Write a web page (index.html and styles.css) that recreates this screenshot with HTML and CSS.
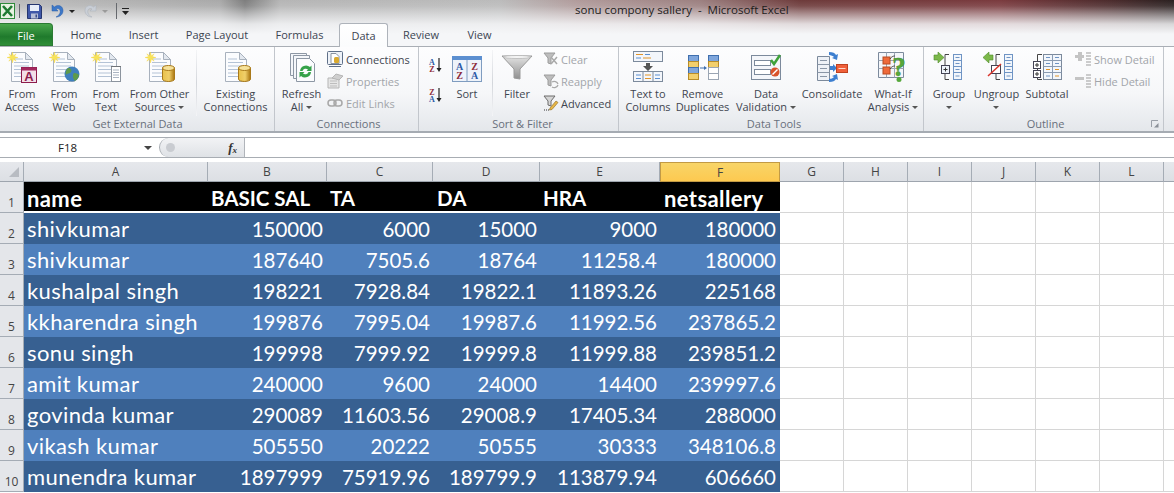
FILE: index.html
```html
<!DOCTYPE html>
<html lang="en">
<head>
<meta charset="utf-8">
<title>sonu compony sallery - Microsoft Excel</title>
<link rel="stylesheet" href="styles.css">
</head>
<body>
<svg class="defs" aria-hidden="true">
  <defs>
    <linearGradient id="gold" x1="0" x2="1" y1="0" y2="0"><stop offset="0" stop-color="#e8c04a"/><stop offset=".55" stop-color="#f0cf6a"/><stop offset="1" stop-color="#a9740f"/></linearGradient>
    <linearGradient id="funnel" x1="0" x2="0" y1="0" y2="1"><stop offset="0" stop-color="#e4e4e4"/><stop offset="1" stop-color="#8f8f8f"/></linearGradient>
    <symbol id="doc" viewBox="0 0 32 32">
      <path d="M5.500 1.500h14l7 7v22h-21z" fill="#fbfcfe" stroke="#a8b1bd"/>
      <path d="M19.500 1.500v7h7z" fill="#e3e8ef" stroke="#a8b1bd"/>
      <path d="M8 8h9M8 11.500h15M8 15h15M8 18.500h15M8 22h15M8 25.500h15" stroke="#b4c3d6"/>
    </symbol>
    <symbol id="star" viewBox="0 0 12 12">
      <path d="M6 0l1 4 3-2-2 3 4 1-4 1 2 3-3-2-1 4-1-4-3 2 2-3-4-1 4-1-2-3 3 2z" fill="#f7e35a" stroke="#f5d33a" stroke-width=".4"/>
    </symbol>
    <symbol id="cyl" viewBox="0 0 13 17">
      <path d="M.5 3v11c0 3.300 12 3.300 12 0V3z" fill="url(#gold)" stroke="#a9791a"/>
      <ellipse cx="6.500" cy="3" rx="6" ry="2.500" fill="#f6e29a" stroke="#a9791a"/>
    </symbol>
    <symbol id="greyfunnel" viewBox="0 0 16 16">
      <path d="M1 2h11L8 7v6l-3-1V7z" fill="#bdbdbd" stroke="#9c9c9c"/>
    </symbol>
  </defs>
</svg>

<header class="chrome">
  <div class="titlebar">
    <div class="qat">
      <svg class="qi xl" viewBox="0 0 15 16"><rect x=".5" y=".5" width="14" height="15" fill="#e8f2e2" stroke="#2f8a3c"/><path d="M3 3l9 10M12 3L3 13" stroke="#1f7a32" stroke-width="2.600"/></svg>
      <span class="qsep"></span>
      <svg class="qi save" viewBox="0 0 15 15"><path d="M.5.500h12l2 2v12H.5z" fill="#4058a8" stroke="#26366f"/><rect x="3" y="1" width="9" height="6" fill="#e8eef8"/><rect x="4" y="9.500" width="7" height="5" fill="#b7bfd6"/><rect x="8.500" y="10.500" width="1.500" height="3" fill="#3a4b86"/></svg>
      <svg class="qi undo" viewBox="0 0 13 14"><path d="M1 1v6h6L5 5c3-1.500 5 1 4 4-.5 1.500-2 3-4 4 4 0 7-2.500 7-6.500C12 2 7 0 3.500 3z" fill="#3d78c8" stroke="#2a5ca6" stroke-width=".5"/></svg>
      <i class="caret"></i>
      <svg class="qi redo" viewBox="0 0 13 14"><path d="M12 1v6H6l2-2C5 3.500 3 6 4 9c.5 1.500 2 3 4 4-4 0-7-2.500-7-6.500C1 2 6 0 9.500 3z" fill="#c9ced6" stroke="#aab0b8" stroke-width=".5"/></svg>
      <i class="caret off"></i>
      <span class="qsep second"></span>
      <svg class="qi custom" viewBox="0 0 7 7"><path d="M0 .5h7" stroke="#222"/><path d="M0 3h7L3.500 7z" fill="#222"/></svg>
    </div>
    <div class="doctitle">sonu compony sallery&nbsp; -&nbsp; Microsoft Excel</div>
  </div>
  <nav class="tabs">
    <div class="tab file">File</div>
    <div class="tab t-home">Home</div>
    <div class="tab t-insert">Insert</div>
    <div class="tab t-page">Page Layout</div>
    <div class="tab t-form">Formulas</div>
    <div class="tab t-data">Data</div>
    <div class="tab t-review">Review</div>
    <div class="tab t-view">View</div>
  </nav>
</header>

<section class="ribbon">
  <div class="group g-ext">
    <div class="gbody">
      <div class="big w-42">
        <svg class="ic" viewBox="0 0 32 32"><use href="#doc"/><use href="#star" x="1" y="1" width="11" height="11"/><rect x="15.500" y="16.500" width="15" height="15" fill="#f3dfe8" stroke="#8c1c4c"/><rect x="15.500" y="16.500" width="15" height="3" fill="#a3285e"/><text x="23" y="30" class="svgA">A</text></svg>
        <span class="lb">From<br>Access</span>
      </div>
      <div class="big w-42">
        <svg class="ic" viewBox="0 0 32 32"><use href="#doc"/><use href="#star" x="1" y="1" width="11" height="11"/><circle cx="24" cy="23" r="7.500" fill="#3f7fbd"/><path d="M20 17c3 0 4 2 3 4s-4 1-5 3c-1-3 0-5 2-7zM26 22c3 0 4 1 5 2-.500 3-2 5-4 6-2-2-3-6-1-8z" fill="#5e9a4a"/></svg>
        <span class="lb">From<br>Web</span>
      </div>
      <div class="big w-42">
        <svg class="ic" viewBox="0 0 32 32"><use href="#doc"/><use href="#star" x="1" y="1" width="11" height="11"/><rect x="21.500" y="15.500" width="9" height="15" fill="#fff" stroke="#8c949e"/><path d="M21.500 15.500h9" stroke="#555" stroke-dasharray="1 1"/><path d="M23 19h6M23 21.500h6M23 24h6M23 26.500h6" stroke="#aab4c2"/></svg>
        <span class="lb">From<br>Text</span>
      </div>
      <div class="big w-65">
        <svg class="ic" viewBox="0 0 32 32"><use href="#doc"/><use href="#star" x="1" y="1" width="11" height="11"/><use href="#cyl" x="18" y="14" width="13" height="17"/></svg>
        <span class="lb">From Other<br>Sources<i class="dd"></i></span>
      </div>
      <span class="sep s-ext"></span>
      <div class="big w-71">
        <svg class="ic" viewBox="0 0 32 32"><use href="#doc"/><use href="#cyl" x="18" y="14" width="13" height="17"/></svg>
        <span class="lb">Existing<br>Connections</span>
      </div>
    </div>
    <div class="glabel">Get External Data</div>
  </div>

  <div class="group g-conn">
    <div class="gbody">
      <div class="big w-45">
        <svg class="ic" viewBox="0 0 32 32"><path d="M4.500 2.500h16v22h-16z" fill="#f4f6fa" stroke="#8d97a4"/><path d="M7.500 4.500h16v23h-16z" fill="#f4f6fa" stroke="#8d97a4"/><path d="M10.500 7.500h13l5 5v18h-18z" fill="#fbfcfe" stroke="#8d97a4"/><path d="M14 20a6 6 0 0 1 10-4l1.500-1.500V20h-5l1.500-1.500a3.500 3.500 0 0 0-5.500 1.500z" fill="#35a24a"/><path d="M25 21a6 6 0 0 1-10 4l-1.500 1.500V21h5L17 22.500a3.500 3.500 0 0 0 5.500-1.500z" fill="#35a24a"/></svg>
        <span class="lb">Refresh<br>All<i class="dd"></i></span>
      </div>
      <div class="smalls s-conn">
        <div class="sm"><svg class="si" viewBox="0 0 16 16"><rect x=".5" y=".5" width="15" height="13" rx="1" fill="#eef2f8" stroke="#5f6f88"/><path d="M4 2.500h5l3 3v7H4z" fill="#fff" stroke="#8a93a0"/><rect x="7" y="6" width="5" height="6" rx="1.500" fill="#d9a92e"/><path d="M2 15.500h12" stroke="#5f6f88"/></svg><span>Connections</span></div>
        <div class="sm off"><svg class="si" viewBox="0 0 16 16"><path d="M1 5h11v10H1z" fill="#e6e6e6" stroke="#b5b5b5"/><path d="M3 8h7M3 10.500h7M3 13h7" stroke="#bdbdbd"/><path d="M5 5l4-4 7 2-4 4z" fill="#cfcfcf" stroke="#b5b5b5"/></svg><span>Properties</span></div>
        <div class="sm off"><svg class="si" viewBox="0 0 16 16"><rect x="1" y="5" width="8" height="6" rx="3" fill="none" stroke="#a8a8a8" stroke-width="1.500"/><rect x="7" y="5" width="8" height="6" rx="3" fill="none" stroke="#a8a8a8" stroke-width="1.500"/></svg><span>Edit Links</span></div>
      </div>
    </div>
    <div class="glabel">Connections</div>
  </div>

  <div class="group g-sort">
    <div class="gbody">
      <div class="azs">
        <svg class="az" viewBox="0 0 16 16"><text x="5" y="8" class="svgL blue">A</text><text x="5" y="15" class="svgL red">Z</text><path d="M12 1v12" stroke="#222" stroke-width="1.200"/><path d="M9.500 11h5L12 15z" fill="#222"/></svg>
        <svg class="az" viewBox="0 0 16 16"><text x="5" y="8" class="svgL red">Z</text><text x="5" y="15" class="svgL blue">A</text><path d="M12 1v12" stroke="#222" stroke-width="1.200"/><path d="M9.500 11h5L12 15z" fill="#222"/></svg>
      </div>
      <div class="big w-44">
        <svg class="ic" viewBox="0 0 32 32"><rect x="1.500" y="5.500" width="29" height="25" fill="#eef3fa" stroke="#7f9cc0"/><rect x="1" y="5" width="30" height="4" fill="#5c8fd0"/><path d="M16 9v21" stroke="#7f9cc0"/><text x="8.500" y="19" class="svgM blue">A</text><text x="8.500" y="28" class="svgM red">Z</text><text x="23.500" y="19" class="svgM red">Z</text><text x="23.500" y="28" class="svgM blue">A</text></svg>
        <span class="lb">Sort</span>
      </div>
      <span class="sep s-sort"></span>
      <div class="big w-42">
        <svg class="ic" viewBox="0 0 32 32"><path d="M1 5h30L19 18v10l-6-1V18z" fill="url(#funnel)" stroke="#9a9a9a"/><ellipse cx="16" cy="6" rx="14" ry="1.500" fill="#f4f4f4" stroke="#a8a8a8" stroke-width=".6"/></svg>
        <span class="lb">Filter</span>
      </div>
      <div class="smalls s-filter">
        <div class="sm off"><svg class="si" viewBox="0 0 16 16"><use href="#greyfunnel"/><path d="M8 6l6 7M14 6l-6 7" stroke="#a9a9a9" stroke-width="1.500"/></svg><span>Clear</span></div>
        <div class="sm off"><svg class="si" viewBox="0 0 16 16"><use href="#greyfunnel"/><path d="M9 9a4 4 0 0 1 6 2M15 12a4 4 0 0 1-6 2" stroke="#a9a9a9" stroke-width="1.300" fill="none"/></svg><span>Reapply</span></div>
        <div class="sm"><svg class="si" viewBox="0 0 16 16"><path d="M1 1h11L8 6v5l-3-1V6z" fill="#d5d5d5" stroke="#6d6d6d"/><path d="M7 13l6-7 2 1.500-6 7-2.500.5z" fill="#e7b648" stroke="#8a6a1d" stroke-width=".6"/><path d="M1 15h5" stroke="#333" stroke-dasharray="1 1"/></svg><span>Advanced</span></div>
      </div>
    </div>
    <div class="glabel">Sort &amp; Filter</div>
  </div>

  <div class="group g-tools">
    <div class="gbody">
      <div class="big w-46">
        <svg class="ic" viewBox="0 0 32 32"><rect x="1.500" y=".5" width="29" height="10" fill="#f3f6fb" stroke="#7c8a9c"/><path d="M4 3.500h7" stroke="#e0942a"/><path d="M13 3.500h5M4 7h5" stroke="#5c8fd0"/><path d="M11 7h8" stroke="#e0942a"/><path d="M14 12h4v3h3l-5 5-5-5h3z" fill="#555"/><rect x="1.500" y="20.500" width="29" height="10" fill="#f3f6fb" stroke="#7c8a9c"/><path d="M11 20.500v10M21 20.500v10" stroke="#7c8a9c"/><path d="M4 24h5M4 27.500h5M23 24h5M23 27.500h5" stroke="#5c8fd0"/><path d="M13 24h6M13 27.500h6" stroke="#e0942a"/></svg>
        <span class="lb">Text to<br>Columns</span>
      </div>
      <div class="big w-63">
        <svg class="ic" viewBox="0 0 32 32"><rect x="1.500" y="4.500" width="10" height="6" fill="#7fa6dc" stroke="#3f6fae"/><rect x="1.500" y="10.500" width="10" height="6" fill="#f2cf6c" stroke="#b88c28"/><rect x="1.500" y="16.500" width="10" height="6" fill="#7fa6dc" stroke="#3f6fae"/><rect x="1.500" y="22.500" width="10" height="6" fill="#f2cf6c" stroke="#b88c28"/><path d="M13 17h5" stroke="#3f6fae"/><path d="M17 15l3 2-3 2z" fill="#3f6fae"/><rect x="21.500" y="4.500" width="10" height="6" fill="#7fa6dc" stroke="#3f6fae"/><rect x="21.500" y="10.500" width="10" height="6" fill="#f2cf6c" stroke="#b88c28"/><rect x="21.500" y="16.500" width="10" height="6" fill="#fff" stroke="#9aa5b3"/><rect x="21.500" y="22.500" width="10" height="6" fill="#fff" stroke="#9aa5b3"/></svg>
        <span class="lb">Remove<br>Duplicates</span>
      </div>
      <div class="big w-64">
        <svg class="ic" viewBox="0 0 32 32"><rect x="1.500" y="4.500" width="29" height="24" fill="#f4f6fa" stroke="#7c8a9c"/><rect x="4.500" y="9.500" width="16" height="5" fill="#fff" stroke="#7c8a9c"/><rect x="4.500" y="18.500" width="16" height="5" fill="#fff" stroke="#7c8a9c"/><path d="M21 9l3 4 6-9" fill="none" stroke="#3fa23a" stroke-width="2.500"/><circle cx="25" cy="21" r="4.500" fill="#d9532b"/><path d="M22.500 23.500l5-5" stroke="#fff" stroke-width="1.500"/></svg>
        <span class="lb">Data<br>Validation<i class="dd"></i></span>
      </div>
      <div class="big w-68">
        <svg class="ic" viewBox="0 0 32 32"><path d="M1.500 5.500h12v24h-12z" fill="#eef1f6" stroke="#7c8a9c"/><path d="M1.500 13.500h12M1.500 21.500h12M4 9.500h7M4 17.500h7M4 25.500h7" stroke="#8a96a6"/><path d="M14 15h3v-2l4 4-4 4v-2h-3z" fill="#3d7fd0"/><rect x="20.500" y="13.500" width="11" height="8" fill="#f0603a" stroke="#c0421f"/><path d="M22.500 17.500h7" stroke="#ffd6c8"/><path d="M13 1c4 0 6 1 7 3l2-1-1 6-5-2 2-1c-1-1-3-2-5-2zM13 31c4 0 6-1 7-3l2 1-1-6-5 2 2 1c-1 1-3 2-5 2z" fill="#3d7fd0"/></svg>
        <span class="lb">Consolidate</span>
      </div>
      <div class="big w-54">
        <svg class="ic" viewBox="0 0 32 32"><path d="M1.500 1.500h25v25h-25z" fill="#f4f6fa" stroke="#7c8a9c"/><path d="M1.500 9.500h25M1.500 17.500h25M9.500 1.500v25M17.500 1.500v25" stroke="#9aa5b3"/><rect x="6" y="6" width="7" height="7" fill="#ef6a3a" stroke="#b84a20"/><rect x="6" y="16" width="7" height="7" fill="#ef6a3a" stroke="#b84a20"/><path d="M13 8c2-3 4-3 5-3M13 18c2-3 4-3 5-3" stroke="#444" fill="none"/><text x="22" y="25" class="svgQ">?</text><circle cx="22" cy="28.500" r="2.500" fill="#56a83c"/></svg>
        <span class="lb">What-If<br>Analysis<i class="dd"></i></span>
      </div>
    </div>
    <div class="glabel">Data Tools</div>
  </div>

  <div class="group g-out">
    <div class="gbody">
      <div class="big w-42">
        <svg class="ic" viewBox="0 0 32 32"><path d="M1 4h4V1l6 5.500L5 12V9H1z" fill="#7cb84a" stroke="#4d8a2a" stroke-width=".6"/><path d="M16 3.500h-4v11M12 21v7.500h4" fill="none" stroke="#444"/><rect x="8.500" y="14.500" width="8" height="8" fill="#eef3fa" stroke="#445"/><path d="M10.500 18.500h4M12.500 16.500v4" stroke="#333"/><rect x="20.500" y="3.500" width="8" height="25" fill="#f2f6fc" stroke="#6f94c4"/><path d="M20.500 9.500h8M20.500 15.500h8M20.500 21.500h8" stroke="#6f94c4"/><path d="M22.500 6.500h4M22.500 12.500h4M22.500 18.500h4M22.500 25h4" stroke="#6f94c4"/></svg>
        <span class="lb">Group<br><i class="dd solo"></i></span>
      </div>
      <div class="big w-53">
        <svg class="ic" viewBox="0 0 32 32"><path d="M12 4H8V1L2 6.500 8 12V9h4z" fill="#7cb84a" stroke="#4d8a2a" stroke-width=".6"/><path d="M19 3.500h-4v11M15 21v7.500h4" fill="none" stroke="#444"/><rect x="10.500" y="14.500" width="9" height="8" fill="#fff" stroke="#445"/><path d="M7 25l13-12" stroke="#d9342b" stroke-width="1.500"/><rect x="23.500" y="3.500" width="8" height="25" fill="#f2f6fc" stroke="#6f94c4"/><path d="M23.500 9.500h8M23.500 15.500h8M23.500 21.500h8" stroke="#6f94c4"/><path d="M25.500 6.500h4M25.500 12.500h4M25.500 18.500h4M25.500 25h4" stroke="#6f94c4"/></svg>
        <span class="lb">Ungroup<br><i class="dd solo"></i></span>
      </div>
      <div class="big w-48">
        <svg class="ic" viewBox="0 0 32 32"><path d="M11 3.500H6.500V10M6.500 16v3M6.500 25v3.500H11" fill="none" stroke="#444"/><rect x="2.500" y="10.500" width="7" height="7" fill="#fff" stroke="#445"/><rect x="2.500" y="19.500" width="7" height="7" fill="#fff" stroke="#445"/><path d="M4 14h4M6 12v4M4 23h4M6 21v4" stroke="#333"/><rect x="12.500" y="3.500" width="18" height="25" fill="#f2f6fc" stroke="#7c8a9c"/><path d="M12.500 9.500h18M12.500 15.500h18M12.500 21.500h18M21.500 3.500v25" stroke="#8a9bb2"/><path d="M15 6.500h4M15 12.500h4M15 25h4" stroke="#6f94c4"/><path d="M15 18.500h4M24 18.500h4M24 25h4" stroke="#e0942a"/><path d="M24 6.500h4M24 12.500h4" stroke="#6f94c4"/></svg>
        <span class="lb">Subtotal</span>
      </div>
      <div class="smalls s-out">
        <div class="sm off"><svg class="si" viewBox="0 0 16 16"><path d="M0 4h3V1h4v3h2v3H7v3H3V7H0z" fill="#c4c4c4"/><path d="M11 2h5M11 5h5M11 8h5M11 11h5M11 14h5" stroke="#9d9d9d"/></svg><span>Show Detail</span></div>
        <div class="sm off"><svg class="si" viewBox="0 0 16 16"><rect x="0" y="4" width="9" height="3" fill="#c4c4c4"/><path d="M11 2h5M11 5h5M11 8h5M11 11h5M11 14h5" stroke="#9d9d9d"/></svg><span>Hide Detail</span></div>
      </div>
    </div>
    <div class="glabel">Outline</div>
    <svg class="launcher" viewBox="0 0 8 8"><path d="M.5 7V.5H7" fill="none" stroke="#9aa0a8"/><path d="M7.500 3v4.500H3z" fill="#8a9098"/></svg>
  </div>
</section>

<div class="formula">
  <div class="namebox"><span class="namev">F18</span><i class="caret name"></i></div>
  <div class="fxwrap"><span class="knob"></span><span class="fx">f<sub>x</sub></span></div>
  <div class="finput"></div>
</div>

<main class="sheet">
<table class="grid">
  <colgroup><col class="c0"><col class="ca"><col class="cb"><col class="cc"><col class="cd"><col class="ce"><col class="cf"><col class="cx"><col class="cx"><col class="cx"><col class="cx"><col class="cx"><col class="cx"><col class="cx"></colgroup>
  <thead><tr><th class="corner"><span class="tri"></span></th><th>A</th><th>B</th><th>C</th><th>D</th><th>E</th><th class="sel">F</th><th>G</th><th>H</th><th>I</th><th>J</th><th>K</th><th>L</th><th></th></tr></thead>
  <tbody>
    <tr class="head"><th>1</th><td>name</td><td class="caps">BASIC SAL</td><td class="caps">TA</td><td class="caps">DA</td><td class="caps">HRA</td><td>netsallery</td><td class="e"></td><td class="e"></td><td class="e"></td><td class="e"></td><td class="e"></td><td class="e"></td><td class="e"></td></tr>
    <tr class="dark"><th>2</th><td>shivkumar</td><td class="n">150000</td><td class="n">6000</td><td class="n">15000</td><td class="n">9000</td><td class="n">180000</td><td class="e"></td><td class="e"></td><td class="e"></td><td class="e"></td><td class="e"></td><td class="e"></td><td class="e"></td></tr>
    <tr class="light"><th>3</th><td>shivkumar</td><td class="n">187640</td><td class="n">7505.6</td><td class="n">18764</td><td class="n">11258.4</td><td class="n">180000</td><td class="e"></td><td class="e"></td><td class="e"></td><td class="e"></td><td class="e"></td><td class="e"></td><td class="e"></td></tr>
    <tr class="dark"><th>4</th><td>kushalpal singh</td><td class="n">198221</td><td class="n">7928.84</td><td class="n">19822.1</td><td class="n">11893.26</td><td class="n">225168</td><td class="e"></td><td class="e"></td><td class="e"></td><td class="e"></td><td class="e"></td><td class="e"></td><td class="e"></td></tr>
    <tr class="light"><th>5</th><td>kkharendra singh</td><td class="n">199876</td><td class="n">7995.04</td><td class="n">19987.6</td><td class="n">11992.56</td><td class="n">237865.2</td><td class="e"></td><td class="e"></td><td class="e"></td><td class="e"></td><td class="e"></td><td class="e"></td><td class="e"></td></tr>
    <tr class="dark"><th>6</th><td>sonu singh</td><td class="n">199998</td><td class="n">7999.92</td><td class="n">19999.8</td><td class="n">11999.88</td><td class="n">239851.2</td><td class="e"></td><td class="e"></td><td class="e"></td><td class="e"></td><td class="e"></td><td class="e"></td><td class="e"></td></tr>
    <tr class="light"><th>7</th><td>amit kumar</td><td class="n">240000</td><td class="n">9600</td><td class="n">24000</td><td class="n">14400</td><td class="n">239997.6</td><td class="e"></td><td class="e"></td><td class="e"></td><td class="e"></td><td class="e"></td><td class="e"></td><td class="e"></td></tr>
    <tr class="dark"><th>8</th><td>govinda kumar</td><td class="n">290089</td><td class="n">11603.56</td><td class="n">29008.9</td><td class="n">17405.34</td><td class="n">288000</td><td class="e"></td><td class="e"></td><td class="e"></td><td class="e"></td><td class="e"></td><td class="e"></td><td class="e"></td></tr>
    <tr class="light"><th>9</th><td>vikash kumar</td><td class="n">505550</td><td class="n">20222</td><td class="n">50555</td><td class="n">30333</td><td class="n">348106.8</td><td class="e"></td><td class="e"></td><td class="e"></td><td class="e"></td><td class="e"></td><td class="e"></td><td class="e"></td></tr>
    <tr class="dark"><th>10</th><td>munendra kumar</td><td class="n">1897999</td><td class="n">75919.96</td><td class="n">189799.9</td><td class="n">113879.94</td><td class="n">606660</td><td class="e"></td><td class="e"></td><td class="e"></td><td class="e"></td><td class="e"></td><td class="e"></td><td class="e"></td></tr>
  </tbody>
</table>
</main>
</body>
</html>
```
FILE: styles.css
```css
* { box-sizing: border-box; }
html, body { margin: 0; padding: 0; height: 493px; overflow: hidden; background: #fff; }
body { width: 1174px; font-family: "Open Sans", "Noto Sans", sans-serif; font-size: 11px; color: #3f4650; }
.defs { display: block; width: 0; height: 0; }

/* window chrome */
.chrome {
  height: 47px;
  background:
    linear-gradient(to bottom, rgba(246,247,249,0) 0, rgba(246,247,249,.1) 6px, rgba(246,247,249,.45) 14px, rgba(246,247,249,.85) 24px, #f5f6f8 34px),
    linear-gradient(to right, #bcbcbc 0, #a9a9a9 220px, #7d7d7d 245px, #b5b5b5 280px, #bbb 500px, #b09a9a 580px, #9c8080 700px, #6d3a3a 800px, #7a3a3e 1000px, #4b2b2c 1110px, #2a2020 1174px);
}
.titlebar { height: 23px; display: flex; align-items: flex-start; }
.qat { width: 575px; height: 22px; display: flex; align-items: center; flex: none; }
.qi { display: block; flex: none; }
.xl { width: 15px; height: 16px; }
.qsep { width: 1px; height: 14px; background: #66696e; margin-left: 4px; }
.save { width: 15px; height: 15px; margin-left: 7px; }
.undo { width: 13px; height: 14px; margin-left: 9px; }
.caret { display: block; width: 0; height: 0; border: 3px solid transparent; border-top: 3px solid #222; border-bottom: 0; margin-left: 5px; }
.caret.off { border-top-color: #9a9a9a; }
.redo { width: 13px; height: 14px; margin-left: 9px; }
.qsep.second { margin-left: 8px; height: 16px; }
.custom { width: 7px; height: 7px; margin-left: 5px; }
.doctitle { font-size: 11.500px; line-height: 20px; color: #1c1c1c; white-space: nowrap; }

.tabs { height: 24px; display: flex; border-bottom: 1px solid #a9aeb5; }
.tab { font-size: 11px; line-height: 23px; text-align: center; color: #3c4552; flex: none; height: 24px; }
.file { width: 53px; height: 23px; background: linear-gradient(#49a64c, #1f7a2c 60%, #2f8e37); color: #fff; border-radius: 0 4px 0 0; border: 1px solid #2b7a33; border-left: 0; }
.t-home { width: 66px; }
.t-insert { width: 49px; }
.t-page { width: 98px; }
.t-form { width: 67px; margin-right: 6px; }
.t-data { width: 49px; background: linear-gradient(#fff, #fbfcfd); border: 1px solid #aeb3ba; border-bottom: 0; border-radius: 3px 3px 0 0; }
.t-review { width: 66px; }
.t-view { width: 51px; }

/* ribbon */
.ribbon {
  height: 86px;
  display: flex;
  background: linear-gradient(#fdfdfe 0, #f6f7f9 55%, #e4e7eb 100%);
  border-bottom: 2px solid #a5abb2;
}
.group { display: flex; flex-direction: column; flex: none; border-right: 1px solid #c2c6cc; position: relative; }
.g-ext { width: 275px; padding-left: 1px; }
.g-conn { width: 144px; padding-left: 4px; }
.g-sort { width: 200px; padding-left: 8px; }
.g-tools { width: 305px; padding-left: 6px; }
.g-out { width: 240px; padding-left: 4px; }
.gbody { flex: 1; display: flex; padding-top: 3px; min-height: 0; }
.glabel { height: 15px; line-height: 15px; text-align: center; color: #68707c; font-size: 11px; }

.big { flex: none; display: flex; flex-direction: column; align-items: center; text-align: center; }
.ic { display: block; width: 32px; height: 32px; margin: 1px 0 4px; flex: none; overflow: visible; }
.lb { display: block; font-size: 11px; line-height: 13px; white-space: nowrap; color: #3f4650; }
.w-42 { width: 42px; }
.w-44 { width: 44px; }
.w-45 { width: 45px; }
.w-46 { width: 46px; }
.w-48 { width: 48px; }
.w-53 { width: 53px; }
.w-54 { width: 54px; }
.w-63 { width: 63px; }
.w-64 { width: 64px; }
.w-65 { width: 65px; }
.w-68 { width: 68px; }
.w-71 { width: 71px; }
.dd { display: inline-block; width: 0; height: 0; border: 3px solid transparent; border-top: 3px solid #555; border-bottom: 0; margin-left: 3px; vertical-align: 2px; }
.dd.solo { margin-left: 0; }

.sep { flex: none; width: 1px; height: 66px; background: linear-gradient(#f4f5f7, #d3d6db 50%, #f4f5f7); }
.s-ext { margin: 0 3px 0 4px; }
.s-sort { margin: 0 3px; }

.smalls { display: flex; flex-direction: column; flex: none; margin-top: -2px; }
.sm { height: 22px; display: flex; align-items: center; gap: 3px; white-space: nowrap; color: #3f4650; }
.sm.off { color: #a2a5aa; }
.si { display: block; width: 16px; height: 16px; flex: none; }
.s-conn { margin-left: 3px; }
.s-filter { margin-left: 5px; }
.s-filter .sm { gap: 2px; }
.s-out { margin-left: 4px; }

.azs { display: flex; flex-direction: column; flex: none; width: 18px; padding-top: 7px; gap: 14px; }
.az { display: block; width: 16px; height: 16px; }

.svgA { font: bold 13px "Liberation Sans", sans-serif; fill: #8c1c4c; text-anchor: middle; }
.svgL { font: bold 8px "Liberation Serif", serif; text-anchor: middle; }
.svgM { font: bold 10px "Liberation Serif", serif; text-anchor: middle; }
.svgQ { font: bold 27px "Liberation Serif", serif; fill: #56a83c; stroke: #3e8a2a; stroke-width: .5; text-anchor: middle; }
.blue { fill: #2c5aa6; }
.red { fill: #8c2b3a; }
.launcher { width: 8px; height: 8px; display: block; position: absolute; right: 4px; bottom: 3px; }

/* formula bar */
.formula { height: 21px; margin-top: 4px; display: flex; border-top: 1px solid #a8adb3; border-bottom: 1px solid #a8adb3; background: #fff; }
.namebox { width: 157px; flex: none; display: flex; align-items: center; font-size: 11.500px; color: #222; }
.namev { margin-left: 58px; width: 86px; }
.caret.name { border-width: 4px 4px 0; border-top-color: #444; margin-left: 0; }
.fxwrap { width: 86px; flex: none; display: flex; align-items: center; justify-content: space-between; margin-left: 2px; padding: 0 7px 0 6px; background: linear-gradient(#f2f3f5, #dfe2e6); border-radius: 10px 0 0 10px; border-left: 1px solid #a8adb3; border-right: 1px solid #b0b4ba; }
.knob { width: 9px; height: 9px; border-radius: 50%; background: #c9ccd1; }
.fx { font: italic bold 13px "Liberation Serif", serif; color: #333; line-height: 1; }
.fx sub { font-size: 9px; vertical-align: -1px; line-height: 0; }
.finput { flex: 1; }

/* sheet */
.sheet { margin-top: 4px; width: 1174px; overflow: hidden; }
.grid { table-layout: fixed; width: 1228px; border-collapse: separate; border-spacing: 0; }
.c0 { width: 24px; } .ca { width: 184px; } .cb { width: 119px; } .cc { width: 106px; } .cd { width: 107px; } .ce { width: 120px; } .cf { width: 120px; } .cx { width: 64px; }
.grid thead th { height: 20px; padding: 0; font-weight: 400; font-size: 12px; color: #444; background: linear-gradient(#e6e8ec, #dcdfe4); border-right: 1px solid #a5acb5; border-bottom: 1px solid #9ea5ae; line-height: 17px; }
.grid thead th.sel { background: linear-gradient(#f8d568, #fdc950); border: 1px solid #c29a45; }
.tri { display: block; width: 0; height: 0; margin-left: 9px; border-left: 10px solid transparent; border-bottom: 10px solid #b8bcc2; }
.grid tbody th { width: 24px; padding: 0 0 1px; height: 31px; vertical-align: bottom; font-weight: 400; font-size: 12px; line-height: 17px; color: #444; background: #e4e6ea; border-right: 1px solid #a5acb5; border-bottom: 1px solid #a5acb5; }
.grid td { height: 31px; padding: 0 3px; font-family: Lato, "Open Sans", sans-serif; font-size: 22px; letter-spacing: .4px; line-height: 30px; vertical-align: bottom; color: #fff; white-space: nowrap; overflow: hidden; }
.grid td.n { text-align: right; font-size: 20.500px; letter-spacing: 0; padding-right: 3px; }
.grid td.n:nth-child(3), .grid td.n:nth-child(7) { padding-right: 4px; }
.dark td { background: #376091; }
.light td { background: #4f80bd; }
.grid .head td { height: 31px; background: #000; font-weight: 700; border-bottom: 2px solid #fff; line-height: 25px; }
.grid .head td.caps { font-size: 20.500px; letter-spacing: 0; }
.grid .head td:nth-child(5), .grid .head td:nth-child(7) { padding-left: 4px; }
.grid td.e { background: #fff; border-right: 1px solid #d6d6d6; border-bottom: 1px solid #d6d6d6; }
```
